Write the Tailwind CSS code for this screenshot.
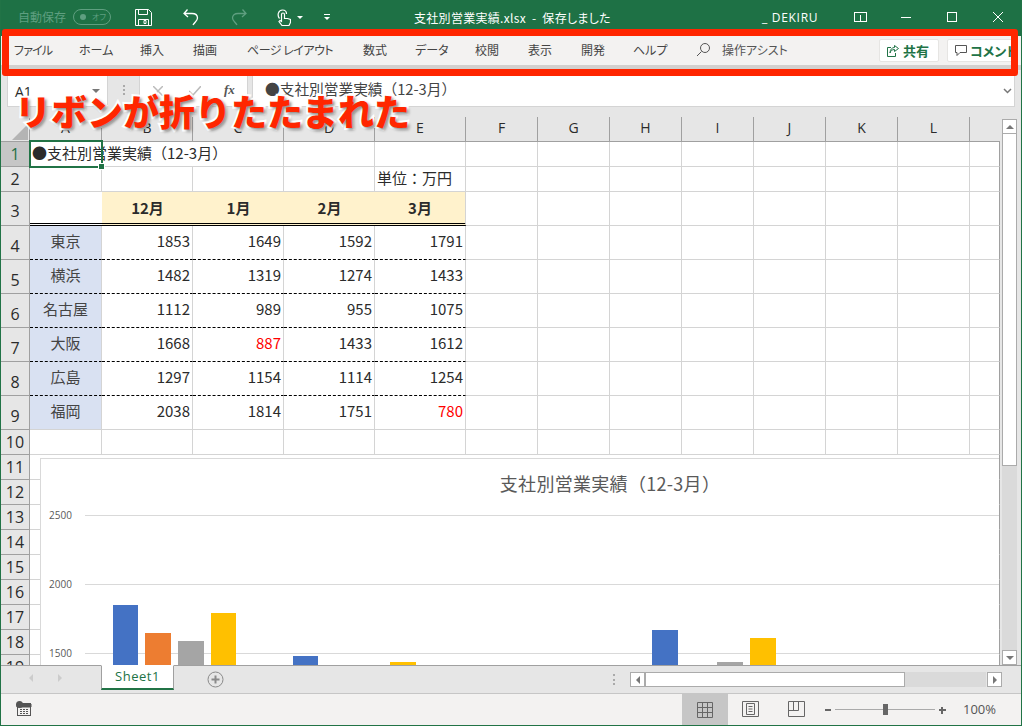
<!doctype html>
<html lang="ja"><head><meta charset="utf-8">
<script src="https://cdn.jsdelivr.net/npm/@tailwindcss/browser@4"></script>
</head>
<body class="m-0 overflow-hidden bg-[#e6e6e6]">
<div class="relative w-[1022px] h-[726px] overflow-hidden flex flex-col border-x border-b border-[#217346] font-['Noto_Sans_CJK_JP','Noto_Sans',sans-serif] text-[#2b2b2b]">

  <!-- title bar -->
  <header class="h-[36px] shrink-0 bg-[#1e7145] flex items-center text-white text-[12px] pb-[2px] relative [font-feature-settings:'palt']">
    <span class="ml-[17px] w-[48px] text-[#5f9f80] text-[12px] whitespace-nowrap">自動保存</span>
    <span class="ml-[7px] w-[38px] h-[16px] rounded-full border border-[#5f9f80] flex items-center text-[#5f9f80] text-[8px]"><span class="ml-[6px] w-[6px] h-[6px] rounded-full bg-[#5f9f80]"></span><span class="ml-[6px]">オフ</span></span>
    <svg class="ml-[24px] w-[17px] h-[17px]" viewBox="0 0 17 17" fill="none" stroke="#fff"><path d="M.5 .5h13l3 3v13H.5z"/><path d="M3.500 .5v5h9v-5M3.500 16.500v-6h10v6M9 11.500h2v3H9z"/></svg>
    <svg class="ml-[31px] w-[16px] h-[17px]" viewBox="0 0 16 17" fill="none" stroke="#fff" stroke-width="1.300"><path d="M4.500 .5 1 4.500l4 3.500M1 4.500h8c3.500 0 5.500 2 5.500 4.500S12 13 10 16"/></svg>
    <svg class="ml-[32px] w-[16px] h-[17px]" viewBox="0 0 16 17" fill="none" stroke="#5f9f80" stroke-width="1.300"><path d="M11.500 .5l3.500 4-4 3.500M15 4.500H7C3.500 4.500 1.500 6.500 1.500 9S4 13 6 16"/></svg>
    <svg class="ml-[30px] w-[14px] h-[17px]" viewBox="0 0 14 17" fill="none" stroke="#fff" stroke-width="1.200"><path d="M2.500 9.500C0 6.500 1 1 5.500 1 8 1 9.500 2.500 9.500 5"/><path d="M4.500 5.500a1.500 1.500 0 0 1 3 0v4h3l3 1v3l-1.500 3H5l-3-4 1-1 1.500 1z"/></svg>
    <span class="ml-[6px] w-0 h-0 border-x-[3px] border-x-transparent border-t-[3px] border-t-white"></span>
    <span class="ml-[21px] flex flex-col items-center gap-[2px]"><span class="w-[6px] h-px bg-white"></span><span class="w-0 h-0 border-x-[3px] border-x-transparent border-t-[3px] border-t-white"></span></span>
    <span class="absolute left-[413px] top-[9px] leading-[18px] whitespace-pre tracking-[0.3px]">支社別営業実績.xlsx  -  保存しました</span>
    <span class="absolute left-[761px] top-[9px] leading-[18px] tracking-[0.7px] font-['Open_Sans',sans-serif]">_ DEKIRU</span>
    <div class="absolute left-[853px] top-[12px] w-[13px] h-[10px] border border-white flex justify-center"><span class="mt-[2px] w-[1px] h-[6px] bg-white"></span></div>
    <span class="absolute left-[900px] top-[17px] w-[10px] h-px bg-white"></span>
    <span class="absolute left-[946px] top-[12px] w-[10px] h-[10px] border border-white"></span>
    <svg class="absolute left-[992px] top-[12px] w-[10px] h-[10px]" viewBox="0 0 10 10" stroke="#fff"><path d="M0 0l10 10M10 0 0 10"/></svg>
  </header>

  <!-- collapsed ribbon -->
  <nav class="h-[29px] shrink-0 bg-[#f3f2f1] flex items-center text-[12px] text-[#444] relative [font-feature-settings:'palt'] pb-[2px]">
    <span class="absolute left-[13px] tracking-[-0.8px]">ファイル</span>
    <span class="absolute left-[78px]">ホーム</span>
    <span class="absolute left-[139px]">挿入</span>
    <span class="absolute left-[192px]">描画</span>
    <span class="absolute left-[246px] tracking-[-0.5px]">ページ レイアウト</span>
    <span class="absolute left-[362px]">数式</span>
    <span class="absolute left-[414px]">データ</span>
    <span class="absolute left-[474px]">校閲</span>
    <span class="absolute left-[527px]">表示</span>
    <span class="absolute left-[580px]">開発</span>
    <span class="absolute left-[632px]">ヘルプ</span>
    <svg class="absolute left-[695px] top-[6px] w-[15px] h-[15px]" viewBox="0 0 15 15" fill="none" stroke="#555"><circle cx="9" cy="6" r="4.500"/><path d="M5.500 9.500 1 14"/></svg>
    <span class="absolute left-[721px] text-[#555]">操作アシスト</span>
    <span class="absolute left-[878px] top-[3px] w-[60px] h-[23px] bg-white border border-[#e6e5e3] rounded-[2px] flex items-center text-[#217346] font-bold text-[13px]">
      <svg class="ml-[7px] mr-[4px] w-[12px] h-[12px]" viewBox="0 0 12 12" fill="none" stroke="#217346"><path d="M7.500 .5 11.500 3.500 7.500 6.500V4.500C5 4.500 3.500 6 3 8 3 4.500 5 2.500 7.500 2.500zM4 2.500H.5v9h8V8"/></svg>共有</span>
    <span class="absolute left-[946px] top-[3px] w-[70px] h-[23px] bg-white border border-[#e6e5e3] rounded-[2px] flex items-center text-[#217346] font-bold text-[13px] whitespace-nowrap overflow-hidden">
      <svg class="ml-[7px] mr-[3px] w-[12px] h-[12px] shrink-0" viewBox="0 0 12 12" fill="none" stroke="#555"><path d="M.5 .5h11v7H5l-3 3v-3H.5z"/></svg>コメント</span>
  </nav>
  <div class="h-[5px] shrink-0 bg-[#d2d0ce]"></div>

  <!-- formula bar -->
  <div class="h-[37px] shrink-0 bg-[#e6e6e6] flex items-end text-[14px]">
    <div class="ml-[6px] w-[101px] h-[36px] bg-white border border-[#d4d4d4] flex items-center justify-between px-[7px] pt-[4px] font-['Open_Sans',sans-serif]">A1<span class="w-0 h-0 border-x-[4px] border-x-transparent border-t-[4px] border-t-[#777]"></span></div>
    <div class="w-[31px] h-[36px] flex justify-center pt-[14px]"><span class="w-[2px] h-[10px] border-l-2 border-dotted border-[#aaa]"></span></div>
    <div class="w-[109px] h-[36px] bg-white border border-[#d4d4d4] flex items-center relative">
      <svg class="absolute left-[13px] top-[14px] w-[10px] h-[10px]" viewBox="0 0 10 10" stroke="#bbb" stroke-width="1.500"><path d="M0 0l10 10M10 0 0 10"/></svg>
      <svg class="absolute left-[49px] top-[14px] w-[12px] h-[10px]" viewBox="0 0 12 10" fill="none" stroke="#bbb" stroke-width="1.500"><path d="M0 5l4 4 8-9"/></svg>
      <span class="absolute left-[84px] top-[8px] text-[13px] font-bold italic font-['Liberation_Serif',serif] text-[#555]">fx</span>
    </div>
    <div class="ml-[4px] w-[763px] h-[36px] bg-white border border-[#d4d4d4] flex items-center pl-[12px] relative text-[#444] text-[14.700px]">●支社別営業実績（12-3月）
      <svg class="absolute right-[2px] top-[16px] w-[9px] h-[6px]" viewBox="0 0 9 6" fill="none" stroke="#777" stroke-width="1.500"><path d="M1 1l3.500 3.500L8 1"/></svg>
    </div>
  </div>

  <!-- sheet area -->
  <div class="flex-1 min-h-0 relative flex overflow-hidden">
    <div class="w-[1000px] overflow-hidden pt-[10px]">
      <div class="grid grid-cols-[29px_72px_91px_91px_91px_91px_72px_72px_72px_72px_72px_72px_72px_30px] grid-rows-[25px_25px_25px_34px_34px_34px_34px_34px_34px_34px_25px_25px_25px_25px_25px_25px_25px_25px_25px_25px] bg-white text-[15px] leading-none *:border-r *:border-b *:border-[#d4d4d4] *:flex *:items-center">
        <!-- column headers -->
        <div class="bg-[#e6e6e6] !border-[#a0a0a0] relative overflow-hidden"><span class="absolute right-[1px] bottom-[1px] w-0 h-0 border-l-[16px] border-l-transparent border-b-[16px] border-b-[#b4b4b4]"></span></div>
        <div class="bg-[#e6e6e6] !border-[#a0a0a0] justify-center text-[14px] pb-[2px] font-['Open_Sans',sans-serif]">A</div>
        <div class="bg-[#e6e6e6] !border-[#a0a0a0] justify-center text-[14px] pb-[2px] font-['Open_Sans',sans-serif]">B</div>
        <div class="bg-[#e6e6e6] !border-[#a0a0a0] justify-center text-[14px] pb-[2px] font-['Open_Sans',sans-serif]">C</div>
        <div class="bg-[#e6e6e6] !border-[#a0a0a0] justify-center text-[14px] pb-[2px] font-['Open_Sans',sans-serif]">D</div>
        <div class="bg-[#e6e6e6] !border-[#a0a0a0] justify-center text-[14px] pb-[2px] font-['Open_Sans',sans-serif]">E</div>
        <div class="bg-[#e6e6e6] !border-[#a0a0a0] justify-center text-[14px] pb-[2px] font-['Open_Sans',sans-serif]">F</div>
        <div class="bg-[#e6e6e6] !border-[#a0a0a0] justify-center text-[14px] pb-[2px] font-['Open_Sans',sans-serif]">G</div>
        <div class="bg-[#e6e6e6] !border-[#a0a0a0] justify-center text-[14px] pb-[2px] font-['Open_Sans',sans-serif]">H</div>
        <div class="bg-[#e6e6e6] !border-[#a0a0a0] justify-center text-[14px] pb-[2px] font-['Open_Sans',sans-serif]">I</div>
        <div class="bg-[#e6e6e6] !border-[#a0a0a0] justify-center text-[14px] pb-[2px] font-['Open_Sans',sans-serif]">J</div>
        <div class="bg-[#e6e6e6] !border-[#a0a0a0] justify-center text-[14px] pb-[2px] font-['Open_Sans',sans-serif]">K</div>
        <div class="bg-[#e6e6e6] !border-[#a0a0a0] justify-center text-[14px] pb-[2px] font-['Open_Sans',sans-serif]">L</div>
        <div class="bg-[#e6e6e6] !border-b-[#a0a0a0] !border-r-0"></div>
        <!-- row 1 -->
        <div class="bg-[#c6c6c6] !border-[#a0a0a0] justify-center text-[16px] text-[#1e7145] font-['Open_Sans',sans-serif]">1</div>
        <div class="relative z-10 !border-r-0 whitespace-nowrap pl-[2px] pb-[3px]">●支社別営業実績（12-3月）</div><div class="!border-r-0"></div><div></div><div></div><div></div><div></div><div></div><div></div><div></div><div></div><div></div><div></div><div class="!border-r-[#a0a0a0]"></div>
        <!-- row 2 -->
        <div class="bg-[#e6e6e6] !border-[#a0a0a0] justify-center text-[16px] font-['Open_Sans',sans-serif]">2</div>
        <div></div><div></div><div></div><div></div><div class="whitespace-nowrap pl-[2px] pb-[4px]">単位：万円</div><div></div><div></div><div></div><div></div><div></div><div></div><div></div><div class="!border-r-[#a0a0a0]"></div>
        <!-- row 3 -->
        <div class="bg-[#e6e6e6] !border-[#a0a0a0] justify-center text-[16px] pt-[4px] font-['Open_Sans',sans-serif]">3</div>
        <div class="![border-bottom-style:double] !border-b-[3px] !border-b-black !border-r-0"></div>
        <div class="bg-[#fff2cc] justify-center font-bold ![border-bottom-style:double] !border-b-[3px] !border-b-black !border-r-0">12月</div>
        <div class="bg-[#fff2cc] justify-center font-bold ![border-bottom-style:double] !border-b-[3px] !border-b-black !border-r-0">1月</div>
        <div class="bg-[#fff2cc] justify-center font-bold ![border-bottom-style:double] !border-b-[3px] !border-b-black !border-r-0">2月</div>
        <div class="bg-[#fff2cc] justify-center font-bold ![border-bottom-style:double] !border-b-[3px] !border-b-black">3月</div>
        <div></div><div></div><div></div><div></div><div></div><div></div><div></div><div class="!border-r-[#a0a0a0]"></div>
        <!-- row 4 -->
        <div class="bg-[#e6e6e6] !border-[#a0a0a0] justify-center text-[16px] pt-[6px] font-['Open_Sans',sans-serif]">4</div>
        <div class="bg-[#d9e1f2] justify-center pb-[5px] text-[#444] ![border-bottom-style:dashed] !border-b-black">東京</div>
        <div class="justify-end pr-[2px] pb-[5px] ![border-bottom-style:dashed] !border-b-black">1853</div><div class="justify-end pr-[2px] pb-[5px] ![border-bottom-style:dashed] !border-b-black">1649</div><div class="justify-end pr-[2px] pb-[5px] ![border-bottom-style:dashed] !border-b-black">1592</div><div class="justify-end pr-[2px] pb-[5px] ![border-bottom-style:dashed] !border-b-black">1791</div>
        <div></div><div></div><div></div><div></div><div></div><div></div><div></div><div class="!border-r-[#a0a0a0]"></div>
        <!-- row 5 -->
        <div class="bg-[#e6e6e6] !border-[#a0a0a0] justify-center text-[16px] pt-[6px] font-['Open_Sans',sans-serif]">5</div>
        <div class="bg-[#d9e1f2] justify-center pb-[5px] text-[#444] ![border-bottom-style:dashed] !border-b-black">横浜</div>
        <div class="justify-end pr-[2px] pb-[5px] ![border-bottom-style:dashed] !border-b-black">1482</div><div class="justify-end pr-[2px] pb-[5px] ![border-bottom-style:dashed] !border-b-black">1319</div><div class="justify-end pr-[2px] pb-[5px] ![border-bottom-style:dashed] !border-b-black">1274</div><div class="justify-end pr-[2px] pb-[5px] ![border-bottom-style:dashed] !border-b-black">1433</div>
        <div></div><div></div><div></div><div></div><div></div><div></div><div></div><div class="!border-r-[#a0a0a0]"></div>
        <!-- row 6 -->
        <div class="bg-[#e6e6e6] !border-[#a0a0a0] justify-center text-[16px] pt-[6px] font-['Open_Sans',sans-serif]">6</div>
        <div class="bg-[#d9e1f2] justify-center pb-[5px] text-[#444] ![border-bottom-style:dashed] !border-b-black">名古屋</div>
        <div class="justify-end pr-[2px] pb-[5px] ![border-bottom-style:dashed] !border-b-black">1112</div><div class="justify-end pr-[2px] pb-[5px] ![border-bottom-style:dashed] !border-b-black">989</div><div class="justify-end pr-[2px] pb-[5px] ![border-bottom-style:dashed] !border-b-black">955</div><div class="justify-end pr-[2px] pb-[5px] ![border-bottom-style:dashed] !border-b-black">1075</div>
        <div></div><div></div><div></div><div></div><div></div><div></div><div></div><div class="!border-r-[#a0a0a0]"></div>
        <!-- row 7 -->
        <div class="bg-[#e6e6e6] !border-[#a0a0a0] justify-center text-[16px] pt-[6px] font-['Open_Sans',sans-serif]">7</div>
        <div class="bg-[#d9e1f2] justify-center pb-[5px] text-[#444] ![border-bottom-style:dashed] !border-b-black">大阪</div>
        <div class="justify-end pr-[2px] pb-[5px] ![border-bottom-style:dashed] !border-b-black">1668</div><div class="justify-end pr-[2px] pb-[5px] ![border-bottom-style:dashed] !border-b-black text-[#ff0000]">887</div><div class="justify-end pr-[2px] pb-[5px] ![border-bottom-style:dashed] !border-b-black">1433</div><div class="justify-end pr-[2px] pb-[5px] ![border-bottom-style:dashed] !border-b-black">1612</div>
        <div></div><div></div><div></div><div></div><div></div><div></div><div></div><div class="!border-r-[#a0a0a0]"></div>
        <!-- row 8 -->
        <div class="bg-[#e6e6e6] !border-[#a0a0a0] justify-center text-[16px] pt-[6px] font-['Open_Sans',sans-serif]">8</div>
        <div class="bg-[#d9e1f2] justify-center pb-[5px] text-[#444] ![border-bottom-style:dashed] !border-b-black">広島</div>
        <div class="justify-end pr-[2px] pb-[5px] ![border-bottom-style:dashed] !border-b-black">1297</div><div class="justify-end pr-[2px] pb-[5px] ![border-bottom-style:dashed] !border-b-black">1154</div><div class="justify-end pr-[2px] pb-[5px] ![border-bottom-style:dashed] !border-b-black">1114</div><div class="justify-end pr-[2px] pb-[5px] ![border-bottom-style:dashed] !border-b-black">1254</div>
        <div></div><div></div><div></div><div></div><div></div><div></div><div></div><div class="!border-r-[#a0a0a0]"></div>
        <!-- row 9 -->
        <div class="bg-[#e6e6e6] !border-[#a0a0a0] justify-center text-[16px] pt-[6px] font-['Open_Sans',sans-serif]">9</div>
        <div class="bg-[#d9e1f2] justify-center pb-[5px] text-[#444]">福岡</div>
        <div class="justify-end pr-[2px] pb-[5px]">2038</div><div class="justify-end pr-[2px] pb-[5px]">1814</div><div class="justify-end pr-[2px] pb-[5px]">1751</div><div class="justify-end pr-[2px] pb-[5px] text-[#ff0000]">780</div>
        <div></div><div></div><div></div><div></div><div></div><div></div><div></div><div class="!border-r-[#a0a0a0]"></div>
        <!-- row 10 -->
        <div class="bg-[#e6e6e6] !border-[#a0a0a0] justify-center text-[16px] font-['Open_Sans',sans-serif]">10</div>
        <div></div><div></div><div></div><div></div><div></div><div></div><div></div><div></div><div></div><div></div><div></div><div></div><div class="!border-r-[#a0a0a0]"></div>
        <!-- rows 11-19: headers (chart lies over the cells) -->
        <div class="bg-[#e6e6e6] !border-[#a0a0a0] justify-center text-[16px] font-['Open_Sans',sans-serif]">11</div><div class="col-span-13 !border-r-[#a0a0a0]"></div>
        <div class="bg-[#e6e6e6] !border-[#a0a0a0] justify-center text-[16px] font-['Open_Sans',sans-serif]">12</div><div class="col-span-13 !border-r-[#a0a0a0]"></div>
        <div class="bg-[#e6e6e6] !border-[#a0a0a0] justify-center text-[16px] font-['Open_Sans',sans-serif]">13</div><div class="col-span-13 !border-r-[#a0a0a0]"></div>
        <div class="bg-[#e6e6e6] !border-[#a0a0a0] justify-center text-[16px] font-['Open_Sans',sans-serif]">14</div><div class="col-span-13 !border-r-[#a0a0a0]"></div>
        <div class="bg-[#e6e6e6] !border-[#a0a0a0] justify-center text-[16px] font-['Open_Sans',sans-serif]">15</div><div class="col-span-13 !border-r-[#a0a0a0]"></div>
        <div class="bg-[#e6e6e6] !border-[#a0a0a0] justify-center text-[16px] font-['Open_Sans',sans-serif]">16</div><div class="col-span-13 !border-r-[#a0a0a0]"></div>
        <div class="bg-[#e6e6e6] !border-[#a0a0a0] justify-center text-[16px] font-['Open_Sans',sans-serif]">17</div><div class="col-span-13 !border-r-[#a0a0a0]"></div>
        <div class="bg-[#e6e6e6] !border-[#a0a0a0] justify-center text-[16px] font-['Open_Sans',sans-serif]">18</div><div class="col-span-13 !border-r-[#a0a0a0]"></div>
        <div class="bg-[#e6e6e6] !border-[#a0a0a0] justify-center text-[16px] font-['Open_Sans',sans-serif]">19</div><div class="col-span-13 !border-r-[#a0a0a0]"></div>
      </div>
    </div>

    <!-- vertical scrollbar -->
    <div class="w-[21px] pt-[12px] pl-[2px] flex flex-col">
      <div class="w-[15px] h-[15px] bg-white border border-[#ababab] flex items-center justify-center"><span class="w-0 h-0 border-x-[4px] border-x-transparent border-b-[4px] border-b-[#777]"></span></div>
      <div class="w-[15px] flex-1 bg-[#dadada] flex flex-col">
        <div class="h-[332px] bg-white border-x border-b border-[#ababab]"></div>
      </div>
      <div class="w-[15px] h-[15px] bg-white border border-[#ababab] flex items-center justify-center"><span class="w-0 h-0 border-x-[4px] border-x-transparent border-t-[4px] border-t-[#777]"></span></div>
    </div>

    <!-- selection -->
    <div class="absolute left-[28px] top-[33px] w-[74px] h-[28px] border-2 border-[#217346] z-20"><span class="absolute right-[-4px] bottom-[-4px] w-[5px] h-[5px] bg-[#217346] border border-white box-content"></span></div>

    <!-- chart -->
    <div class="absolute left-[39px] top-[351px] w-[959px] h-[241px] bg-white border-l border-t border-[#d9d9d9] overflow-hidden z-10 text-[#595959]">
      <div class="absolute left-0 right-0 top-[12px] text-center pl-[180px] text-[18px] tracking-[0.3px] leading-[24px]">支社別営業実績（12-3月）</div>
      <span class="absolute left-[8px] top-[50px] text-[10px] leading-[12px] font-['Open_Sans',sans-serif]">2500</span>
      <span class="absolute left-[8px] top-[119px] text-[10px] leading-[12px] font-['Open_Sans',sans-serif]">2000</span>
      <span class="absolute left-[8px] top-[188px] text-[10px] leading-[12px] font-['Open_Sans',sans-serif]">1500</span>
      <svg class="absolute left-0 top-[1px]" width="960" height="240" shape-rendering="crispEdges">
        <g stroke="#d9d9d9"><path d="M44 55.500h916M44 124.500h916M44 193.500h916"/></g>
        <rect x="72" y="145" width="25" height="95" fill="#4472c4"/>
        <rect x="104" y="173" width="26" height="67" fill="#ed7d31"/>
        <rect x="137" y="181" width="26" height="59" fill="#a5a5a5"/>
        <rect x="170" y="153" width="25" height="87" fill="#ffc000"/>
        <rect x="252" y="196" width="25" height="44" fill="#4472c4"/>
        <rect x="349" y="202" width="26" height="38" fill="#ffc000"/>
        <rect x="611" y="170" width="26" height="70" fill="#4472c4"/>
        <rect x="676" y="202" width="26" height="38" fill="#a5a5a5"/>
        <rect x="709" y="178" width="26" height="62" fill="#ffc000"/>
      </svg>
    </div>
  </div>

  <!-- sheet tabs -->
  <div class="h-[28px] shrink-0 bg-[#e6e6e6] border-t border-[#a0a0a0] flex relative z-20">
    <span class="absolute left-[28px] top-[8px] w-0 h-0 border-y-[4px] border-y-transparent border-r-[4px] border-r-[#ccc]"></span>
    <span class="absolute left-[57px] top-[8px] w-0 h-0 border-y-[4px] border-y-transparent border-l-[4px] border-l-[#ccc]"></span>
    <div class="absolute left-[100px] top-[-1px] w-[73px] h-[25px] bg-white border-x border-[#a0a0a0] border-t border-t-white border-b-2 border-b-[#217346] text-[13px] tracking-[0.5px] text-[#217346] flex items-center justify-center font-['Open_Sans',sans-serif]">Sheet1</div>
    <svg class="absolute left-[206px] top-[5px] w-[17px] h-[17px]" viewBox="0 0 17 17" fill="none" stroke="#8a8a8a"><circle cx="8.500" cy="8.500" r="7.500"/><path d="M8.500 4.500v8M4.500 8.500h8" stroke-width="2"/></svg>
    <span class="absolute left-[612px] top-[8px] w-[3px] h-[11px] border-l-2 border-dotted border-[#aaa]"></span>
    <div class="absolute left-[629px] top-[6px] w-[372px] h-[15px] flex">
      <div class="w-[356px] h-[15px] bg-[#dadada] flex">
        <span class="w-[15px] h-[15px] bg-white border border-[#ababab] flex items-center justify-center"><span class="w-0 h-0 border-y-[4px] border-y-transparent border-r-[4px] border-r-[#777]"></span></span>
        <span class="w-[260px] h-[15px] bg-white border border-[#ababab]"></span>
      </div>
      <span class="ml-[1px] w-[15px] h-[15px] bg-white border border-[#ababab] flex items-center justify-center"><span class="w-0 h-0 border-y-[4px] border-y-transparent border-l-[4px] border-l-[#777]"></span></span>
    </div>
  </div>

  <!-- status bar -->
  <footer class="h-[32px] shrink-0 bg-[#f3f2f1] border-t border-[#c6c6c6] flex items-center relative z-20">
    <svg class="absolute left-[15px] top-[7px] w-[16px] h-[16px]" viewBox="0 0 16 16" fill="none" stroke="#555"><rect x="1.500" y="2.500" width="13" height="12"/><path d="M1 3h14v3H1z" fill="#555"/><circle cx="3.500" cy="3.500" r="3.500" fill="#555" stroke="none"/><path d="M4 8.500h8M4 10.500h8M4 12.500h8" stroke-dasharray="2 1"/></svg>
    <div class="absolute left-[681px] top-0 w-[46px] h-[32px] bg-[#c6c6c6] flex items-center justify-center">
      <svg class="w-[16px] h-[16px]" viewBox="0 0 16 16" fill="none" stroke="#666"><path d="M.5 .5h15v15H.5zM5.500 .5v15M10.500 .5v15M.5 5.500h15M.5 10.500h15"/></svg>
    </div>
    <svg class="absolute left-[741px] top-[7px] w-[17px] h-[16px]" viewBox="0 0 17 16" fill="none" stroke="#666"><path d="M.5 .5h16v15H.5zM4.500 2.500h8v11h-8zM6.500 5.500h4M6.500 8h4M6.500 10.500h4"/></svg>
    <svg class="absolute left-[787px] top-[7px] w-[17px] h-[16px]" viewBox="0 0 17 16" fill="none" stroke="#666"><path d="M.5 .5h16v15H.5zM.5 9.500h10v-9M5.500 .5v9"/></svg>
    <span class="absolute left-[824px] top-[15px] w-[6px] h-[2px] bg-[#666]"></span>
    <span class="absolute left-[834px] top-[15px] w-[100px] h-px bg-[#aaa]"></span>
    <span class="absolute left-[882px] top-[10px] w-[5px] h-[11px] bg-[#666]"></span>
    <span class="absolute left-[938px] top-[15px] w-[7px] h-[2px] bg-[#666]"></span>
    <span class="absolute left-[940px] top-[13px] w-[2px] h-[7px] bg-[#666]"></span>
    <span class="absolute left-[962px] top-[6px] text-[13px] leading-[18px] text-[#555] font-['Open_Sans',sans-serif]">100%</span>
  </footer>

  <!-- annotation -->
  <div class="absolute left-[1px] top-[29px] w-[1016px] h-[47px] border-[7px] border-[#ff2600] rounded-[3px] z-30"></div>
  <div class="absolute left-[14px] top-[86px] z-30 text-[36px] leading-[48px] font-black text-[#ff2600] whitespace-nowrap [-webkit-text-stroke:4px_white] [paint-order:stroke_fill] [text-shadow:2px_2px_3px_rgba(0,0,0,0.45)]">リボンが折りたたまれた</div>
</div>
</body></html>
